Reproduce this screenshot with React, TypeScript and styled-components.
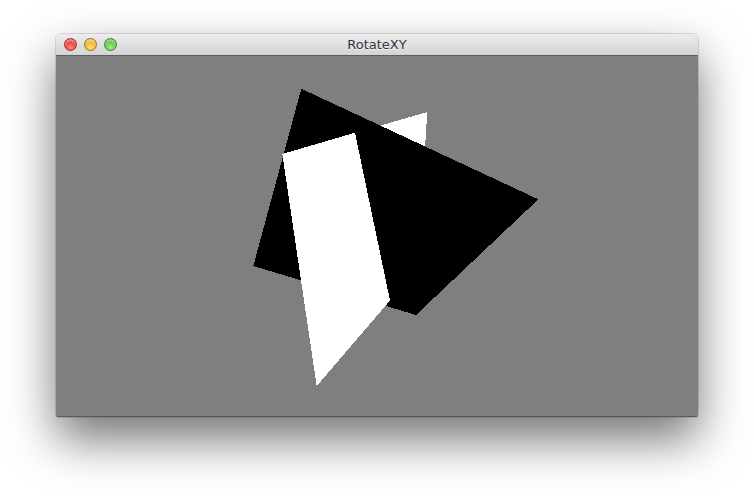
import React from "react";
import styled, { createGlobalStyle } from "styled-components";

const Global = createGlobalStyle`
  html, body { margin: 0; padding: 0; background: #ffffff; }
  body { width: 754px; height: 496px; overflow: hidden; }
`;

const Page = styled.div`
  width: 754px;
  height: 496px;
  box-sizing: border-box;
  padding: 34px 0 0 56px;
  background: #ffffff;
`;

const Window = styled.div`
  width: 642px;
  display: flex;
  flex-direction: column;
  border-radius: 5px 5px 2px 2px;
  overflow: hidden;
  box-shadow: 0 22px 48px rgba(0, 0, 0, 0.55), 0 0 0 1px rgba(0, 0, 0, 0.12);
`;

const TitleBar = styled.div`
  position: relative;
  height: 22px;
  display: flex;
  align-items: center;
  justify-content: center;
  background: linear-gradient(#ededed, #d4d4d4);
  border-bottom: 1px solid #5e5e5e;
  box-sizing: border-box;
`;

const Lights = styled.div`
  position: absolute;
  left: 8px;
  top: 4px;
  display: flex;
  gap: 7px;
`;

const Light = styled.span<{ $c1: string; $c2: string; $border: string }>`
  width: 13px;
  height: 13px;
  border-radius: 50%;
  box-sizing: border-box;
  border: 1px solid ${(p) => p.$border};
  background: radial-gradient(circle at 50% 75%, ${(p) => p.$c1} 0%, ${(p) => p.$c2} 75%);
  box-shadow: inset 0 2px 2px rgba(255, 255, 255, 0.55);
`;

const Title = styled.span`
  font-family: "DejaVu Sans", "Liberation Sans", sans-serif;
  font-size: 13px;
  color: #2e3440;
  text-shadow: 0 1px 0 rgba(255, 255, 255, 0.6);
`;

const Canvas = styled.div`
  height: 361px;
  background: #7f7f7f;
  border-bottom: 1px solid #5a5a5a;
  box-sizing: border-box;
  display: flex;
`;

const Drawing = styled.svg`
  width: 642px;
  height: 360px;
  display: block;
`;

export default function App() {
  return (
    <>
      <Global />
      <Page>
        <Window>
          <TitleBar>
            <Lights>
              <Light $c1="#ff8a80" $c2="#e0231c" $border="#9e2a22" />
              <Light $c1="#ffe07a" $c2="#e8a010" $border="#a06d10" />
              <Light $c1="#a6f08a" $c2="#3fb82c" $border="#3a7f26" />
            </Lights>
            <Title>RotateXY</Title>
          </TitleBar>
          <Canvas>
            <Drawing viewBox="56 56 642 360" shapeRendering="crispEdges">
              <polygon points="282.3,154 427.3,112 417.5,267 316.7,386" fill="#ffffff" />
              <polygon points="301.3,88.7 538.3,199.3 416,315 253.3,266" fill="#000000" />
              <polygon points="282.3,154 355,132.7 390,300.5 316.7,386" fill="#ffffff" />
            </Drawing>
          </Canvas>
        </Window>
      </Page>
    </>
  );
}
